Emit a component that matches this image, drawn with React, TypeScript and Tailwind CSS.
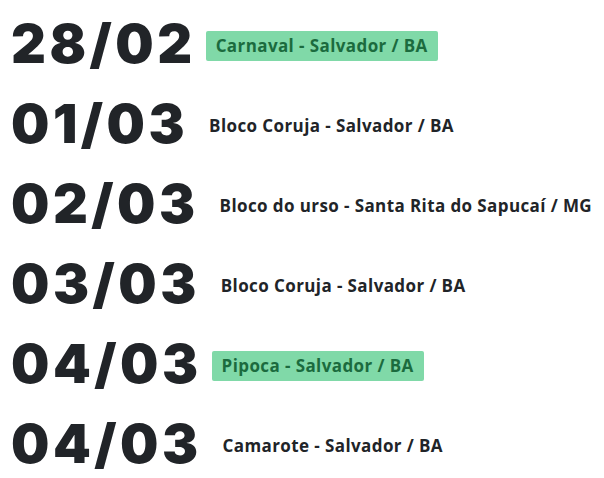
const events = [
  { date: "28/02", label: "Carnaval - Salvador / BA", hl: true },
  { date: "01/03", label: "Bloco Coruja - Salvador / BA", hl: false },
  { date: "02/03", label: "Bloco do urso - Santa Rita do Sapucaí / MG", hl: false },
  { date: "03/03", label: "Bloco Coruja - Salvador / BA", hl: false },
  { date: "04/03", label: "Pipoca - Salvador / BA", hl: true },
  { date: "04/03", label: "Camarote - Salvador / BA", hl: false },
];

export default function App() {
  return (
    <div className="w-[604px] h-[478px] bg-white pt-[4px] pl-[11px] overflow-hidden">
      {events.map((e, i) => (
        <div key={i} className="flex items-center h-[80px]">
          <span className="font-['Inter',sans-serif] font-black text-[54px] leading-none tracking-[3.5px] text-[#212428]">
            {e.date}
          </span>
          {e.hl ? (
            <span className="ml-[10px] mt-[4px] px-[10px] py-[5px] bg-[#80d9a8] rounded-[2px] font-['Open_Sans',sans-serif] font-bold text-[17px] leading-[20px] tracking-[0.4px] text-[#1b6b3e]">
              {e.label}
            </span>
          ) : (
            <span className="ml-[21px] mt-[4px] font-['Open_Sans',sans-serif] font-bold text-[17px] leading-[20px] tracking-[0.4px] text-[#212428]">
              {e.label}
            </span>
          )}
        </div>
      ))}
    </div>
  );
}
